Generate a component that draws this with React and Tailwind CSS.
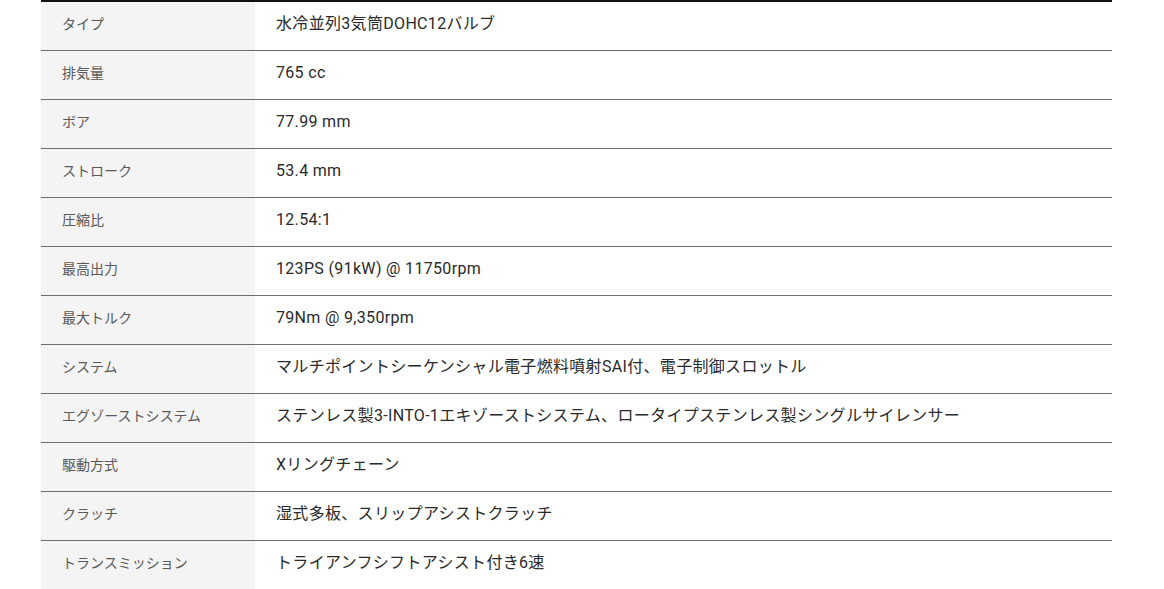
const rows = [
  ["タイプ", "水冷並列3気筒DOHC12バルブ"],
  ["排気量", "765 cc"],
  ["ボア", "77.99 mm"],
  ["ストローク", "53.4 mm"],
  ["圧縮比", "12.54:1"],
  ["最高出力", "123PS (91kW) @ 11750rpm"],
  ["最大トルク", "79Nm @ 9,350rpm"],
  ["システム", "マルチポイントシーケンシャル電子燃料噴射SAI付、電子制御スロットル"],
  ["エグゾーストシステム", "ステンレス製3-INTO-1エキゾーストシステム、ロータイプステンレス製シングルサイレンサー"],
  ["駆動方式", "Xリングチェーン"],
  ["クラッチ", "湿式多板、スリップアシストクラッチ"],
  ["トランスミッション", "トライアンフシフトアシスト付き6速"],
];

export default function App() {
  return (
    <div className="w-[1164px] bg-white pl-[41px] pr-[52px]" style={{ fontFamily: 'Roboto, "Noto Sans CJK JP", sans-serif' }}>
      <div className="border-t-2 border-[#111]">
        {rows.map(([k, v], i) => (
          <div key={i} className="flex border-b border-[#6e6e6e] h-[49px]">
            <div className="w-[214px] shrink-0 bg-[#f4f4f4] pl-[21px] pt-[13px] text-[14px] leading-[18px] text-[#5a5a5a]">
              {k}
            </div>
            <div className="flex-1 pl-[21px] pt-[13px] text-[16px] leading-[18px] text-[#2a2a2a] tracking-[0.02em]">
              {v}
            </div>
          </div>
        ))}
      </div>
    </div>
  );
}
